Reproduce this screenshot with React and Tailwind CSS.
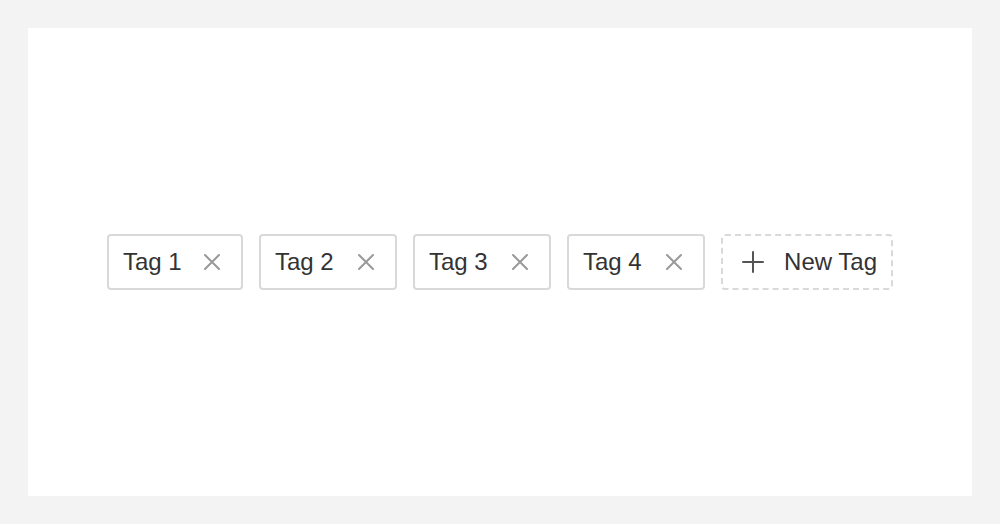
import { useState } from 'react'

function CloseIcon() {
  return (
    <svg width="18" height="18" viewBox="0 0 18 18" fill="none" stroke="#999" strokeWidth="2" strokeLinecap="round">
      <path d="M2 2 L16 16 M16 2 L2 16" />
    </svg>
  )
}

function PlusIcon() {
  return (
    <svg width="22" height="22" viewBox="0 0 22 22" fill="none" stroke="#555" strokeWidth="2" strokeLinecap="round">
      <path d="M11 1 L11 21 M1 11 L21 11" />
    </svg>
  )
}

export default function App() {
  const [tags, setTags] = useState(['Tag 1', 'Tag 2', 'Tag 3', 'Tag 4'])

  return (
    <div className="w-[1000px] h-[524px] bg-[#f3f3f3] p-[28px]" style={{ fontFamily: '"Liberation Sans", Arial, sans-serif' }}>
      <div className="w-full h-full bg-white flex items-center justify-center gap-[16px]">
        {tags.map((t, i) => (
          <div key={t} className={`${i === 0 ? 'w-[136px]' : 'w-[138px]'} h-[56px] border-2 border-[#d9d9d9] rounded-[4px] pl-[14px] pr-[20px] flex items-center justify-between text-[24px] text-[#333]`}>
            <span>{t}</span>
            <button onClick={() => setTags(tags.filter((x) => x !== t))} className="flex items-center">
              <CloseIcon />
            </button>
          </div>
        ))}
        <div className="w-[172px] h-[56px] border-2 border-dashed border-[#d9d9d9] rounded-[4px] pl-[19px] pr-[14px] flex items-center justify-between text-[24px] text-[#333]">
          <PlusIcon />
          <span>New Tag</span>
        </div>
      </div>
    </div>
  )
}
